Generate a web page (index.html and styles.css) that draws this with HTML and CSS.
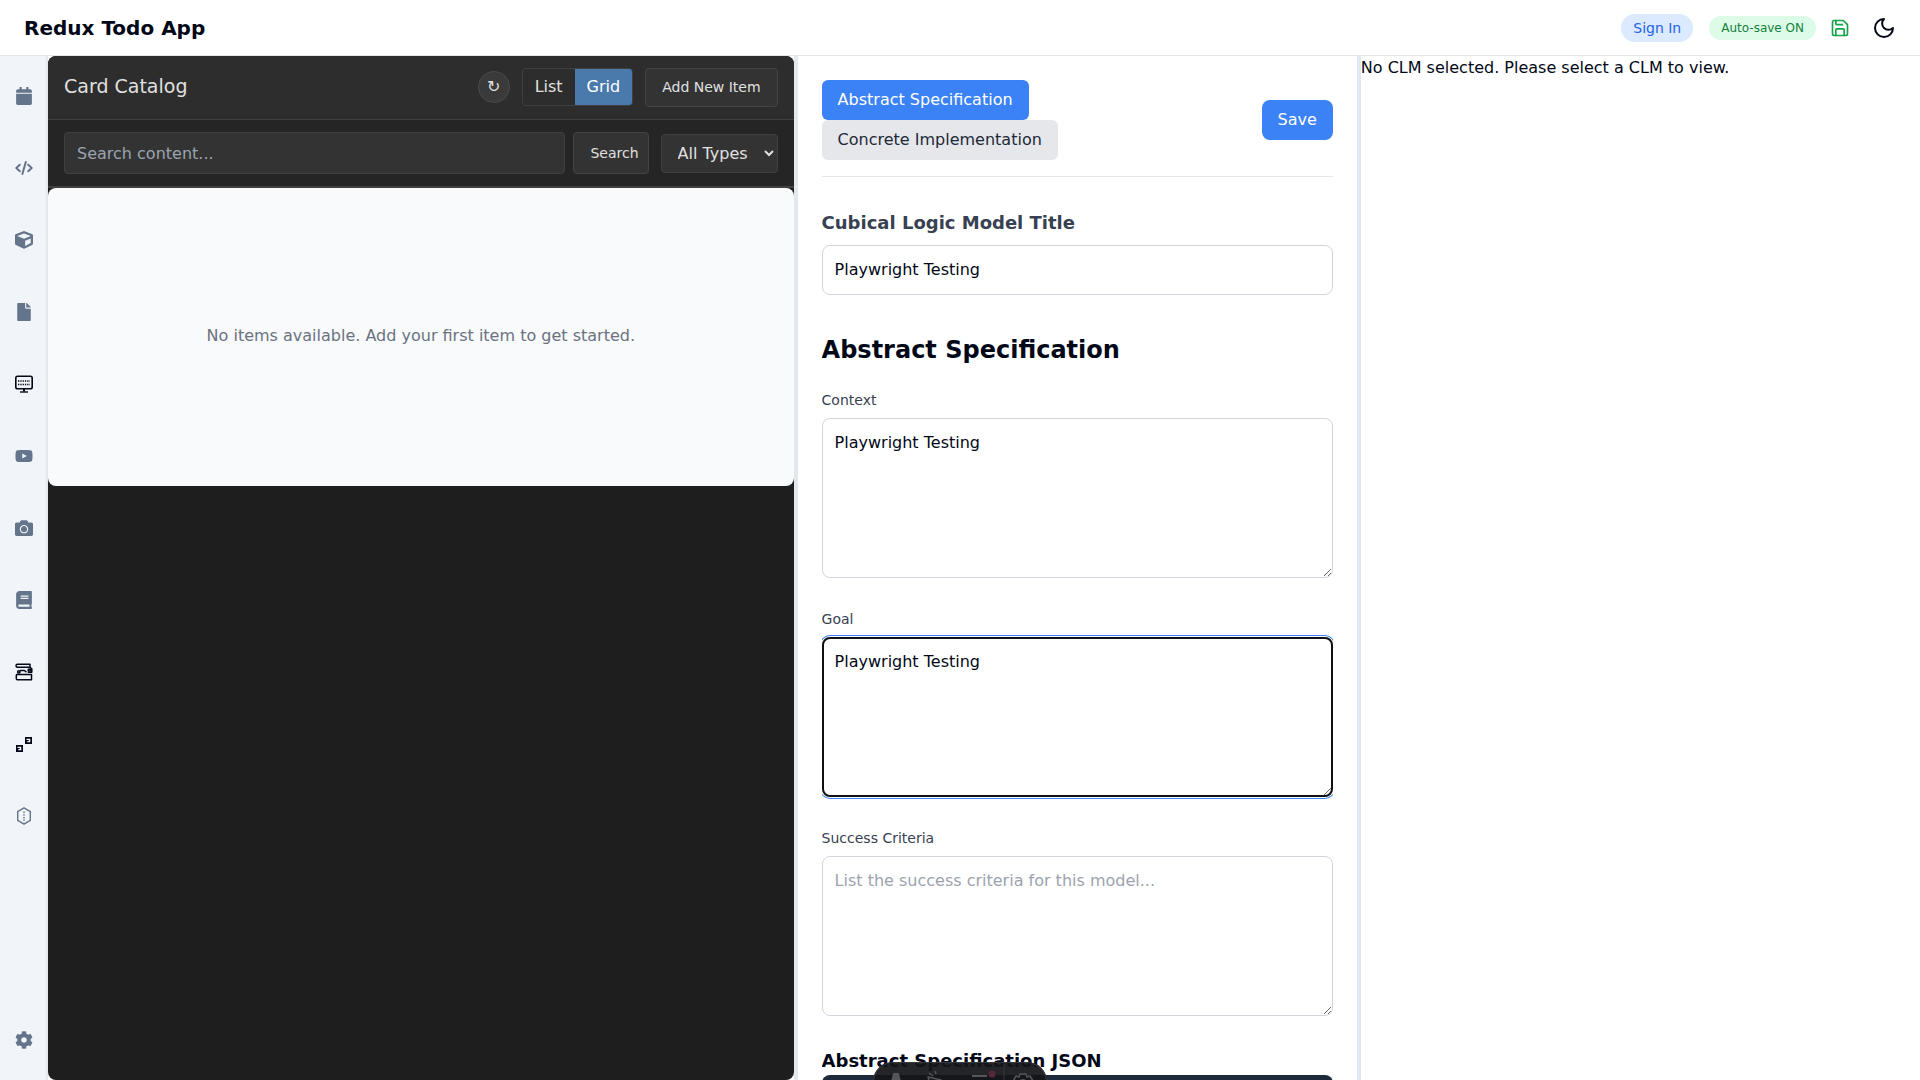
FILE: index.html
```html
<!DOCTYPE html>
<html lang="en">
<head>
<meta charset="utf-8">
<title>Redux Todo App</title>
<link rel="stylesheet" href="styles.css">
</head>
<body>
<header class="topbar">
  <h1 class="brand">Redux Todo App</h1>
  <div class="topbar-actions">
    <button class="pill pill-signin" type="button">Sign In</button>
    <button class="pill pill-autosave" type="button">Auto-save ON</button>
    <button class="icon-btn save-icon" type="button" aria-label="Save">
      <svg width="20" height="20" viewBox="0 0 24 24" fill="none" stroke="currentColor" stroke-width="2" stroke-linecap="round" stroke-linejoin="round"><path d="M15.2 3a2 2 0 0 1 1.4.6l3.8 3.8a2 2 0 0 1 .6 1.4V19a2 2 0 0 1-2 2H5a2 2 0 0 1-2-2V5a2 2 0 0 1 2-2z"/><path d="M17 21v-7a1 1 0 0 0-1-1H8a1 1 0 0 0-1 1v7M7 3v4a1 1 0 0 0 1 1h7"/></svg>
    </button>
    <button class="icon-btn moon-icon" type="button" aria-label="Toggle theme">
      <svg width="24" height="24" viewBox="0 0 24 24" fill="none" stroke="currentColor" stroke-width="2" stroke-linecap="round" stroke-linejoin="round"><path d="M12 3a6 6 0 0 0 9 9 9 9 0 1 1-9-9Z"/></svg>
    </button>
  </div>
</header>
<div class="workspace">
  <nav class="rail" aria-label="Tools">
    <a href="#calendar" aria-label="Calendar"><svg viewBox="0 0 448 512"><path d="M12 192h424c6.6 0 12 5.4 12 12v260c0 26.500-21.500 48-48 48H48c-26.500 0-48-21.500-48-48V204c0-6.600 5.400-12 12-12zm436-44v-36c0-26.500-21.500-48-48-48h-48V12c0-6.600-5.400-12-12-12h-40c-6.600 0-12 5.400-12 12v52H160V12c0-6.600-5.400-12-12-12h-40c-6.600 0-12 5.400-12 12v52H48C21.500 64 0 85.500 0 112v36c0 6.600 5.400 12 12 12h424c6.600 0 12-5.400 12-12z"/></svg></a>
    <a href="#code" aria-label="Code"><svg viewBox="0 0 18 18" fill="none" stroke="currentColor" stroke-width="2" stroke-linecap="round" stroke-linejoin="round"><path d="M4.800 5.700 1.300 9l3.500 3.300M13.200 5.700 16.700 9l-3.500 3.300M10.800 3 7.400 15"/></svg></a>
    <a href="#models" aria-label="Models"><svg viewBox="0 0 512 512"><path d="M239.1 6.3l-208 78c-18.7 7-31.1 25-31.1 45v225.1c0 18.2 10.3 34.8 26.5 42.9l208 104c13.5 6.8 29.4 6.8 42.900 0l208-104c16.300-8.100 26.500-24.800 26.500-42.900V129.300c0-20-12.400-37.900-31.100-44.900l-208-78C262 2.200 250 2.200 239.100 6.300zM256 68.400l192 72v1.100l-192 78-192-78v-1.100l192-72zm32 356V275.500l160-65v133.900l-160 80z"/></svg></a>
    <a href="#files" aria-label="Files"><svg viewBox="0 0 384 512"><path d="M224 136V0H24C10.700 0 0 10.700 0 24v464c0 13.300 10.700 24 24 24h336c13.300 0 24-10.700 24-24V160H248c-13.200 0-24-10.800-24-24zm160-14.100v6.100H256V0h6.100c6.400 0 12.500 2.500 17 7l97.900 98c4.500 4.500 7 10.600 7 16.900z"/></svg></a>
    <a href="#display" aria-label="Display" class="dark"><svg viewBox="0 0 18 18" fill="none" stroke="currentColor"><rect x=".8" y="1.300" width="16.400" height="12.400" rx="1.800" stroke-width="1.600"/><path d="M3 6h12M3 9.500h12" stroke-width="1.400" stroke-dasharray="1.300 1"/><path d="M9 13.500v3" stroke-width="2"/><path d="M5 17h8" stroke-width="1.400"/></svg></a>
    <a href="#video" aria-label="Video"><svg viewBox="0 0 576 512"><path d="M549.700 124.100c-6.300-23.700-24.800-42.300-48.300-48.600C458.800 64 288 64 288 64S117.200 64 74.600 75.500c-23.500 6.300-42 24.900-48.300 48.600-11.400 42.900-11.400 132.300-11.400 132.300s0 89.400 11.400 132.300c6.300 23.600 24.800 41.500 48.300 47.800C117.200 448 288 448 288 448s170.800 0 213.400-11.500c23.500-6.300 42-24.200 48.300-47.800 11.400-42.900 11.400-132.300 11.400-132.300s0-89.400-11.400-132.300zM232.100 337.600V175.200l142.800 81.200-142.800 81.200z"/></svg></a>
    <a href="#camera" aria-label="Camera"><svg viewBox="0 0 512 512"><path d="M512 144v288c0 26.500-21.500 48-48 48H48c-26.500 0-48-21.500-48-48V144c0-26.500 21.500-48 48-48h88l12.300-32.900c7-18.700 24.900-31.100 44.900-31.100h125.500c20 0 37.900 12.400 44.900 31.100L376 96h88c26.500 0 48 21.500 48 48zM376 288c0-66.200-53.800-120-120-120s-120 53.800-120 120 53.800 120 120 120 120-53.800 120-120zm-32 0c0 48.500-39.500 88-88 88s-88-39.500-88-88 39.500-88 88-88 88 39.500 88 88z"/></svg></a>
    <a href="#book" aria-label="Book"><svg viewBox="0 0 448 512"><path d="M448 360V24c0-13.300-10.700-24-24-24H96C43 0 0 43 0 96v320c0 53 43 96 96 96h328c13.300 0 24-10.700 24-24v-16c0-7.500-3.500-14.300-8.900-18.700-4.200-15.400-4.200-59.300 0-74.700 5.400-4.300 8.900-11.100 8.900-18.600zM128 134c0-3.300 2.700-6 6-6h212c3.300 0 6 2.700 6 6v20c0 3.300-2.700 6-6 6H134c-3.300 0-6-2.700-6-6v-20zm0 64c0-3.300 2.700-6 6-6h212c3.300 0 6 2.700 6 6v20c0 3.300-2.700 6-6 6H134c-3.300 0-6-2.700-6-6v-20zm253.400 250H96c-17.700 0-32-14.300-32-32 0-17.600 14.400-32 32-32h285.400c-1.900 17.100-1.900 46.900 0 64z"/></svg></a>
    <a href="#library" aria-label="Library" class="dark"><svg viewBox="0 0 18 18" fill="none" stroke="currentColor" stroke-width="1.500" stroke-linejoin="round"><path d="M2.500 1.300H15v3H2.500a1.500 1.500 0 0 1 0-3zM2 11.500h14.500v5.200H2a1.500 1.500 0 0 1-.7-1.300v-2.600A1.500 1.500 0 0 1 2 11.500z"/><circle cx="3.800" cy="8.900" r="1.200"/><path d="M5 7.500h4.500l2 1.800M15 4.300l1.800 1.500v3.500h-4"/><path d="M13.300 6.300h2.200v1.800h-2.200z"/></svg></a>
    <a href="#nodes" aria-label="Nodes" class="dark"><svg viewBox="0 0 18 18"><path fill-rule="evenodd" d="M10 2h7v7h-7zM11.500 3.700v1.300h2.300v1h-1.500v1.300h3V3.700zM1 10h7v7H1zM2.500 11.700v1.300h2.300v1H3.300v1.300h3v-3.600z"/></svg></a>
    <a href="#hex" aria-label="Hexagon"><svg viewBox="0 0 18 18" fill="none" stroke="currentColor" stroke-width="1.400" stroke-linejoin="round"><path d="M9 .8 15.300 4.600v8.800L9 17.200 2.700 13.400V4.600z"/><path d="M9 4.500v11" stroke-dasharray="1.500 1.200"/></svg></a>
    <a href="#settings" aria-label="Settings" class="rail-end"><svg viewBox="0 0 512 512"><path d="M487.400 315.700l-42.600-24.600c4.300-23.200 4.300-47 0-70.200l42.600-24.600c4.900-2.800 7.100-8.600 5.500-14-11.100-35.600-30-67.800-54.700-94.600-3.800-4.100-10-5.100-14.800-2.300L380.800 110c-17.900-15.400-38.500-27.300-60.800-35.100V25.800c0-5.600-3.900-10.500-9.400-11.700-36.700-8.200-74.300-7.800-109.200 0-5.500 1.200-9.400 6.100-9.400 11.700V75c-22.200 7.900-42.800 19.800-60.800 35.100L88.700 85.500c-4.900-2.800-11-1.900-14.800 2.300-24.700 26.700-43.600 58.900-54.700 94.600-1.700 5.400.6 11.200 5.500 14L67.300 221c-4.300 23.200-4.300 47 0 70.200l-42.600 24.600c-4.900 2.800-7.100 8.600-5.500 14 11.100 35.600 30 67.800 54.700 94.600 3.800 4.100 10 5.100 14.800 2.300l42.600-24.600c17.900 15.400 38.500 27.300 60.800 35.100v49.200c0 5.600 3.900 10.500 9.400 11.700 36.700 8.200 74.300 7.800 109.200 0 5.500-1.200 9.400-6.100 9.400-11.700v-49.200c22.200-7.900 42.800-19.800 60.800-35.100l42.600 24.600c4.900 2.800 11 1.900 14.800-2.300 24.700-26.700 43.600-58.900 54.700-94.600 1.500-5.500-.7-11.300-5.600-14.100zM256 336c-44.100 0-80-35.900-80-80s35.900-80 80-80 80 35.900 80 80-35.900 80-80 80z"/></svg></a>
  </nav>
  <main class="panes">
    <section class="catalog">
      <div class="catalog-head">
        <h2 class="catalog-title">Card Catalog</h2>
        <button class="refresh" type="button" aria-label="Refresh">↻</button>
        <div class="toggle">
          <button type="button">List</button>
          <button class="active" type="button">Grid</button>
        </div>
        <button class="dark-btn" type="button">Add New Item</button>
      </div>
      <form class="catalog-search">
        <input class="search-input" type="text" placeholder="Search content..." aria-label="Search content">
        <button class="dark-btn search-btn" type="button">Search</button>
        <select class="type-select" aria-label="Item type"><option>All Types</option></select>
      </form>
      <div class="catalog-empty">No items available. Add your first item to get started.</div>
    </section>
    <div class="splitter"></div>
    <section class="editor">
      <div class="editor-head">
        <div class="tabs">
          <button class="tab active" type="button">Abstract Specification</button>
          <button class="tab" type="button">Concrete Implementation</button>
        </div>
        <button class="save-btn" type="button">Save</button>
      </div>
      <form class="fields">
        <label class="title-label" for="model-title">Cubical Logic Model Title</label>
        <input class="field" id="model-title" type="text" value="Playwright Testing">
        <h2 class="section-title">Abstract Specification</h2>
        <label class="field-label" for="context">Context</label>
        <textarea class="field area" id="context">Playwright Testing</textarea>
        <label class="field-label" for="goal">Goal</label>
        <textarea class="field area current" id="goal">Playwright Testing</textarea>
        <label class="field-label" for="criteria">Success Criteria</label>
        <textarea class="field area" id="criteria" placeholder="List the success criteria for this model..."></textarea>
        <h3 class="json-title">Abstract Specification JSON</h3>
        <pre class="json-view"></pre>
      </form>
    </section>
    <div class="splitter"></div>
    <section class="viewer">No CLM selected. Please select a CLM to view.</section>
  </main>
</div>
<div class="dock">
  <svg width="174" height="40" viewBox="0 0 174 40" fill="none" stroke="#55565b" stroke-width="2" stroke-linejoin="round"><path d="M17 27l4-15h4l4 15z" fill="#55565b"/><path d="M55 15l13 3-10 8zM56 11l4 3M62 9l1 3" stroke-width="1.500"/><path d="M99 14h15M99 20h15M99 26h15"/><circle cx="119" cy="12" r="3.500" fill="#5a2535" stroke="none"/><path d="M131 0v40" stroke="#36373c" stroke-width="1"/><path d="M147 12h6l1 3 3-1 3 5-2 2 2 3-3 4-3-1-1 3h-6l-1-3-3 1-3-4 2-3-2-2 3-5 3 1z" stroke-width="1.500"/><circle cx="150" cy="21" r="3"/></svg>
</div>
</body>
</html>
```
FILE: styles.css
```css
* { box-sizing: border-box; }

body {
  margin: 0;
  height: 100vh;
  display: flex;
  flex-direction: column;
  overflow: hidden;
  background: #fff;
  color: #020817;
  font: 16px/24px "DejaVu Sans", sans-serif;
}

h1, h2, h3, pre { margin: 0; }
button, input, select, textarea { font: inherit; color: inherit; margin: 0; }
button { border: 0; padding: 0; background: none; cursor: pointer; }

.topbar {
  flex: none;
  height: 56px;
  padding: 0 24px;
  display: flex;
  align-items: center;
  justify-content: space-between;
  border-bottom: 1px solid #e5e7eb;
}
.brand { font-size: 20px; line-height: 28px; }
.topbar-actions { display: flex; align-items: center; gap: 16px; }
.pill { border-radius: 16px; padding: 4px 12px; }
.pill-signin { background: #dbeafe; color: #2563eb; font-size: 14px; line-height: 20px; }
.pill-autosave { background: #dcfce7; color: #15803d; font-size: 12px; line-height: 16px; }
.icon-btn { display: flex; }
.save-icon { color: #16a34a; margin: 0 6px 0 -2px; }

.workspace { flex: 1; min-height: 0; display: flex; }

.rail {
  flex: none;
  width: 48px;
  padding: 4px 0;
  display: flex;
  flex-direction: column;
  background: #f1f5f9;
  border-right: 2px solid #e5e7eb;
}
.rail a {
  height: 72px;
  padding-left: 2px;
  display: flex;
  align-items: center;
  justify-content: center;
  color: #64748b;
}
.rail a.dark { color: #020817; }
.rail svg { width: 18px; height: 18px; }
.rail svg:not([fill]) { fill: currentColor; }
.rail .rail-end { margin-top: auto; }

.panes {
  flex: 1;
  min-width: 0;
  display: grid;
  grid-template-columns: minmax(0, 4fr) 4px minmax(0, 3fr) 4px minmax(0, 3fr);
  grid-template-rows: minmax(0, 1fr);
}
.splitter { background: #e2e8f0; }

.catalog {
  overflow: hidden;
  border-radius: 8px;
  background: #1e1e1e;
  color: #e0e0e0;
}
.catalog-head {
  height: 64px;
  padding: 0 16px 1px;
  display: flex;
  align-items: center;
  gap: 12px;
  background: #2d2d2d;
  border-bottom: 1px solid #404040;
}
.catalog-title { flex: 1; font-size: 19px; line-height: 24px; padding-bottom: 2px; font-weight: 400; }
.refresh {
  width: 32px;
  height: 32px;
  border: 1px solid #4a4a4a;
  border-radius: 50%;
  background: #3a3a3a;
}
.toggle {
  display: flex;
  overflow: hidden;
  border: 1px solid #404040;
  border-radius: 4px;
}
.toggle button { padding: 6px 12px; }
.toggle .active { background: #4a7aab; color: #fff; }
.dark-btn {
  height: 39px;
  padding: 0 16px;
  border: 1px solid #444;
  border-radius: 4px;
  background: #333;
  font-size: 14px;
  white-space: nowrap;
}
.catalog-search {
  height: 68px;
  padding: 0 16px;
  display: flex;
  align-items: center;
  background: #252525;
  border-bottom: 2px solid #404040;
}
.search-input {
  flex: 1;
  min-width: 0;
  height: 42px;
  padding: 0 12px;
  border: 1px solid #404040;
  border-radius: 4px;
  background: #333;
}
.search-input::placeholder { color: #9ca3af; }
.search-btn { height: 42px; margin: 0 12px 0 8px; padding-right: 9px; }
.type-select {
  width: 117px;
  height: 39px;
  padding: 0 0 0 12px;
  border: 1px solid #404040;
  border-radius: 4px;
  background: #333;
}
.catalog-empty {
  height: 298px;
  padding-bottom: 2px;
  display: flex;
  align-items: center;
  justify-content: center;
  border-radius: 8px;
  background: #f8fafc;
  color: #6b7280;
}

.editor {
  padding: 24px;
  overflow: auto;
  scrollbar-width: none;
}
.editor-head {
  padding-bottom: 16px;
  margin-bottom: 32px;
  display: flex;
  align-items: center;
  justify-content: space-between;
  border-bottom: 1px solid #e5e7eb;
}
.tabs { display: flex; flex-direction: column; align-items: flex-start; }
.tab, .save-btn { padding: 8px 16px; border-radius: 6px; }
.save-btn { border-radius: 8px; }
.tab { background: #e5e7eb; color: #1f2937; }
.tab.active, .save-btn { background: #3b82f6; color: #fff; }
.fields { display: flex; flex-direction: column; overflow-x: clip; }
.title-label { margin-bottom: 8px; font-size: 18px; line-height: 28px; font-weight: 700; color: #374151; }
.field-label { margin-bottom: 8px; font-size: 14px; line-height: 20px; color: #374151; }
.field {
  width: 100%;
  padding: 12px;
  border: 1px solid #d1d5db;
  border-radius: 8px;
  background: #fff;
}
.field::placeholder { color: #9ca3af; }
.area { height: 160px; margin-bottom: 31px; resize: vertical; }
.current {
  outline: 2px solid #101010;
  outline-offset: -2px;
  box-shadow: 0 0 0 1px #fff, 0 0 0 2px #3b82f6;
}
.section-title { margin: 39px 0 24px; font-size: 24px; line-height: 32px; }
.json-title { font-size: 18px; line-height: 28px; }
.json-view { height: 160px; border-radius: 8px; background: #1e293b; }

.viewer { min-width: 0; }

.dock {
  position: fixed;
  left: 50%;
  bottom: -22px;
  height: 40px;
  transform: translateX(-50%);
  overflow: hidden;
  border-radius: 20px;
  background: #141519ee;
  box-shadow: inset 0 0 0 1px #36373c;
}
.dock svg { display: block; }
```
